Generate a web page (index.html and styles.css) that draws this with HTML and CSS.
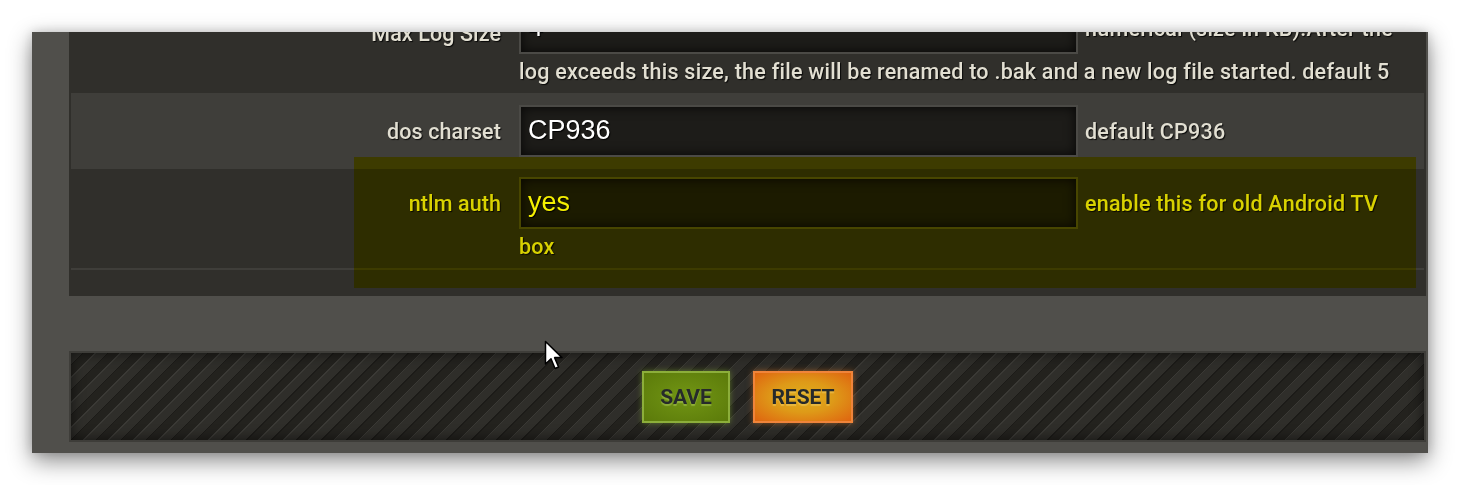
FILE: index.html
```html
<!DOCTYPE html>
<html>
<head>
<meta charset="utf-8">
<link rel="stylesheet" href="styles.css">
</head>
<body>
<div class="shot">
  <div class="page">
    <div class="settings">
      <div class="row row--odd">
        <div class="label label--low">Max Log Size</div>
        <div class="value"><input class="field" type="text" value="4"><span class="desc">numerical (size in KB).After the log exceeds this size, the file will be renamed to .bak and a new log file started. default 5</span></div>
      </div>
      <div class="row row--even row--single">
        <div class="label">dos charset</div>
        <div class="value"><input class="field" type="text" value="CP936"><span class="desc">default CP936</span></div>
      </div>
      <div class="row row--odd">
        <div class="label">ntlm auth</div>
        <div class="value"><input class="field" type="text" value="yes"><span class="desc">enable this for old Android TV box</span></div>
      </div>
      <div class="divider"></div>
    </div>
    <div class="actions">
      <button class="btn btn--save" type="button">SAVE</button>
      <button class="btn btn--reset" type="button">RESET</button>
    </div>
  </div>
</div>
<div class="highlight"></div>
<svg class="cursor" width="20" height="31" viewBox="0 0 20 31">
  <path d="M1.5 1.5 L1.5 24 L7 18.8 L11 28.5 L14.6 27 L10.6 17.6 L18 17.6 Z" fill="#fff" stroke="#000" stroke-width="1.5" stroke-linejoin="round"/>
</svg>
</body>
</html>
```
FILE: styles.css
```css
html, body {
  margin: 0;
  padding: 0;
  background: #ffffff;
}
body {
  position: relative;
  width: 1460px;
  height: 485px;
  overflow: hidden;
  font-family: Roboto, "Noto Sans", sans-serif;
}
.shot {
  margin: 32px 0 0 32px;
  width: 1396px;
  height: 421px;
  overflow: hidden;
  background: #504f4b;
  box-shadow: 0 8px 22px rgba(0, 0, 0, 0.45), 0 0 10px rgba(0, 0, 0, 0.15);
}
.page {
  padding: 0 2px 0 37px;
}
.settings {
  margin-top: -38px;
  background: #302f2b;
  padding: 0 2px 26px 2px;
}
.row {
  display: flex;
  align-items: baseline;
  padding: 8px 0 3px;
}
.row--single {
  padding: 12px 0 12px;
}
.row--odd {
  background: #302f2b;
}
.row--even {
  background: #3f3e3a;
}
.label {
  width: 430px;
  padding-right: 18px;
  text-align: right;
  flex: none;
  font-size: 21.5px;
  font-weight: 500;
  letter-spacing: 0.1px;
  color: #e2dfd2;
  text-shadow: 1px 1px 1px rgba(0, 0, 0, 0.85);
}
.label--low {
  position: relative;
  top: 5px;
}
.value {
  width: 886px;
  font-size: 21.5px;
  font-weight: 500;
  letter-spacing: 0.25px;
  line-height: 36px;
  color: #e2dfd2;
  text-shadow: 1px 1px 1px rgba(0, 0, 0, 0.85);
}
.field {
  display: inline-block;
  box-sizing: border-box;
  width: 559px;
  height: 52px;
  margin: 0 7px 0 0;
  padding: 0 7px 2px;
  border: 2px solid #4b4a46;
  background: #1d1c19;
  box-shadow: inset 0 0 12px rgba(0, 0, 0, 0.8);
  font-family: "Liberation Sans", Arial, sans-serif;
  font-size: 27px;
  font-weight: 400;
  letter-spacing: 0;
  color: #ffffff;
  text-shadow: 1px 1px 1px #000;
  outline: none;
  vertical-align: baseline;
}
.divider {
  height: 2px;
  background: #3f3e3a;
}
.actions {
  margin-top: 55px;
  height: 87px;
  border: 2px solid #3e3d39;
  display: flex;
  align-items: center;
  justify-content: center;
  gap: 23px;
  background:
    repeating-linear-gradient(135deg,
      #2f2e2a 0px, #2f2e2a 8px,
      #1c1b18 8px, #1c1b18 9px,
      #23221e 9px, #23221e 16.7px,
      #3a3935 16.7px, #3a3935 17.7px);
  box-shadow: inset 0 0 14px rgba(0, 0, 0, 0.6);
}
.btn {
  height: 52px;
  border: 2px solid;
  padding: 0;
  font-family: Roboto, sans-serif;
  font-weight: 700;
  font-size: 21px;
  color: #262a2b;
  cursor: pointer;
}
.btn--save {
  width: 88px;
  border-color: #8cae3a;
  background: radial-gradient(ellipse at center, #729614 0%, #5b7a0a 100%);
  box-shadow: 0 0 6px rgba(150, 200, 50, 0.45);
  text-shadow: 0 2px 1px rgba(170, 200, 90, 0.55);
}
.btn--reset {
  width: 100px;
  border-color: #f0843a;
  background: radial-gradient(ellipse at center, #dfae1c 0%, #de9a18 45%, #df6410 100%);
  box-shadow: 0 0 6px rgba(240, 130, 40, 0.5);
  text-shadow: 0 2px 1px rgba(240, 200, 90, 0.6);
}
.highlight {
  position: absolute;
  left: 354px;
  top: 157px;
  width: 1062px;
  height: 131px;
  background: #f5f000;
  mix-blend-mode: multiply;
  pointer-events: none;
}
.cursor {
  position: absolute;
  left: 544px;
  top: 340px;
}
```
